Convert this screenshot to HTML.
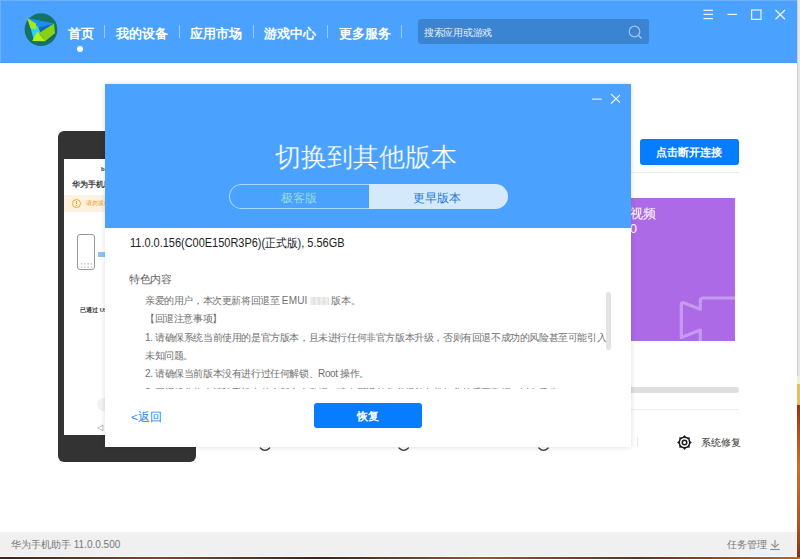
<!DOCTYPE html>
<html><head><meta charset="utf-8">
<style>
*{margin:0;padding:0;box-sizing:border-box}
html,body{width:800px;height:559px;overflow:hidden;background:#fff}
body{position:relative;font-family:"Liberation Sans",sans-serif}
.a{position:absolute}
.hdr{left:0;top:0;width:797px;height:63px;background:#4aa2fe}
.nav{top:25px;height:18px;font-size:13px;font-weight:bold;color:#fff;line-height:18px;white-space:nowrap}
.sep{top:25px;width:1px;height:13px;background:rgba(255,255,255,0.45)}
.search{left:418px;top:19px;width:231px;height:25px;background:#3b84d2;border-radius:3px}
.stxt{left:424px;top:26px;font-size:9.7px;letter-spacing:-0.3px;color:#e8f2fc;line-height:14px;white-space:nowrap}
.win{background:#fff}
.modal{left:105px;top:84px;width:526px;height:363px;background:#fff;box-shadow:0 0 5px rgba(0,0,0,0.15)}
.mh{left:0;top:0;width:526px;height:144px;background:#4aa2fe}
.body-t{font-size:10px;color:#717171;white-space:nowrap;line-height:14px;letter-spacing:-0.4px}
</style></head>
<body>
<!-- wallpaper strips -->
<div class="a" style="left:797px;top:0;width:3px;height:376px;background:#e7e7e7"></div>
<div class="a" style="left:797px;top:0;width:1px;height:559px;background:#cfcfcf"></div>
<div class="a" style="left:797px;top:376px;width:3px;height:8px;background:#f0f0d8"></div>
<div class="a" style="left:797px;top:384px;width:3px;height:21px;background:#e6c060"></div>
<div class="a" style="left:797px;top:405px;width:3px;height:154px;background:linear-gradient(#a03010,#d07020 40%,#b05020 80%,#803010)"></div>
<div class="a" style="left:0;top:556px;width:797px;height:1px;background:#fafafa"></div>
<div class="a" style="left:0;top:557px;width:800px;height:2px;background:linear-gradient(90deg,#3a2418,#7a4a30 20%,#3a2418 40%,#8a5838 60%,#5a3420 80%,#b06a30)"></div>

<!-- header -->
<div class="a hdr"></div>
<div class="a" style="left:0;top:0;width:797px;height:1px;background:#6cb0f9"></div>
<div class="a" style="left:0;top:0;width:1px;height:63px;background:#6cb0f9"></div>
<div class="a" style="left:0;top:62px;width:797px;height:1px;background:#439df9"></div>
<!-- logo -->
<svg class="a" style="left:22px;top:11px" width="38" height="38" viewBox="0 0 38 38">
  <circle cx="19" cy="18.6" r="16.4" fill="#167266"/>
  <polygon points="5.1,7.1 32,12.6 22,17.5 17.5,16.5" fill="#1c8ef0"/>
  <polygon points="17.5,16.5 32,12.6 22,19 18.5,19" fill="#1565c8"/>
  <polygon points="7.5,13 16,15 18.5,22 11.5,28" fill="#2cd2f2"/>
  <polygon points="32,12.6 33,22.5 23.5,30.3 17,22" fill="#86d214"/>
  <polygon points="33,22.5 33.3,23.5 24,31 23.5,30.3" fill="#15508a"/>
  <polygon points="5.1,7.1 13.9,12.6 14.6,18.4 8.5,17.3" fill="#a6ea1c"/>
  <polygon points="15.3,20.4 23.5,30.3 10.2,29.9" fill="#b2f21e"/>
</svg>
<div class="a nav" style="left:68px">首页</div>
<div class="a" style="left:77px;top:46px;width:6px;height:6px;border-radius:3px;background:#fff"></div>
<div class="a sep" style="left:104px"></div>
<div class="a nav" style="left:116px">我的设备</div>
<div class="a sep" style="left:179px"></div>
<div class="a nav" style="left:190px">应用市场</div>
<div class="a sep" style="left:253px"></div>
<div class="a nav" style="left:264px">游戏中心</div>
<div class="a sep" style="left:327px"></div>
<div class="a nav" style="left:339px">更多服务</div>
<div class="a sep" style="left:401px"></div>
<div class="a search"></div>
<div class="a stxt">搜索应用或游戏</div>
<svg class="a" style="left:628px;top:24.5px" width="15" height="15" viewBox="0 0 15 15"><circle cx="6.5" cy="6.5" r="5.3" fill="none" stroke="#a2c6ee" stroke-width="1.2"/><line x1="10.5" y1="10.5" x2="13.5" y2="13.5" stroke="#a9cdf2" stroke-width="1.2"/></svg>
<!-- window controls -->
<svg class="a" style="left:700px;top:5px" width="90" height="20" viewBox="0 0 90 20">
  <g stroke="#eaf4fe" stroke-width="1.2" fill="none">
    <line x1="3.5" y1="5.3" x2="13" y2="5.3"/><line x1="3.5" y1="9.4" x2="13" y2="9.4"/><line x1="3.5" y1="13.6" x2="13" y2="13.6"/>
    <line x1="27.4" y1="9.4" x2="37" y2="9.4"/>
    <rect x="51.6" y="5" width="9.4" height="9.4"/>
    <line x1="75.5" y1="5" x2="85" y2="14.3"/><line x1="85" y1="5" x2="75.5" y2="14.3"/>
  </g>
</svg>

<!-- phone mockup -->
<div class="a" style="left:58px;top:131px;width:138px;height:331px;background:#333;border-radius:6px"></div>
<div class="a" style="left:64px;top:159px;width:132px;height:276px;background:#fff"></div>
<div class="a" style="left:101px;top:165px;font-size:6px;font-weight:bold;color:#333;line-height:8px">b</div>
<div class="a" style="left:72px;top:180px;font-size:8px;font-weight:bold;color:#3a3a3a;line-height:10px;white-space:nowrap">华为手机助手</div>
<div class="a" style="left:64px;top:195px;width:60px;height:17px;background:#fdf1e2"></div>
<div class="a" style="left:72px;top:199px;width:9px;height:9px;border:1px solid #f5a623;border-radius:50%"></div>
<div class="a" style="left:76px;top:201px;width:1px;height:3px;background:#f5a623"></div>
<div class="a" style="left:76px;top:205px;width:1px;height:1px;background:#f5a623"></div>
<div class="a" style="left:86px;top:199px;font-size:6px;color:#f29a1a;line-height:8px;white-space:nowrap">请勿拔出数据线</div>
<div class="a" style="left:77px;top:234px;width:18px;height:36px;border:1px solid #999;border-radius:3px"></div>
<div class="a" style="left:79.5px;top:262px;width:13px;height:7px;background:radial-gradient(circle,#cfcfcf 0.9px,transparent 1.3px) 0 0/3.25px 3.5px"></div>
<div class="a" style="left:98px;top:252px;width:8px;height:5px;background:#8cc2f2"></div>
<div class="a" style="left:80px;top:306px;font-size:6px;font-weight:bold;color:#333;line-height:8px;white-space:nowrap">已通过 USB 连接</div>
<div class="a" style="left:97px;top:398px;width:13px;height:13px;background:#f2f2f2;border-radius:50%"></div>
<div class="a" style="left:97px;top:423px;font-size:8px;color:#888;line-height:9px">◁</div>

<!-- right panel -->
<div class="a" style="left:640px;top:139px;width:99px;height:26px;background:#067cff;border-radius:3px"></div>
<div class="a" style="left:656px;top:144px;font-size:11px;font-weight:bold;color:#fff;line-height:16px;white-space:nowrap">点击断开连接</div>
<div class="a" style="left:600px;top:172px;width:139px;height:1px;background:#ececec"></div>
<div class="a" style="left:600px;top:198px;width:135px;height:143px;background:#ac6ae6;overflow:hidden">
  <div class="a" style="left:4px;top:8px;font-size:12.5px;color:#fff;line-height:16px;white-space:nowrap">图片视频</div>
  <div class="a" style="left:30px;top:24px;font-size:12.5px;color:#fff;line-height:14px;white-space:nowrap">0</div>
  <svg class="a" style="left:0;top:0" width="135" height="143" viewBox="600 198 135 143">
    <path d="M745,298 L703,298 Q700.3,298 700.3,301 L700.3,309.2 L683.5,302.8 Q681.3,302 681.3,304.5 L681.3,337.6 L700.3,330.1 L700.3,345" fill="none" stroke="rgba(255,255,255,0.32)" stroke-width="3.2" stroke-linejoin="round"/>
  </svg>
</div>
<div class="a" style="left:600px;top:387px;width:139px;height:6px;background:#dfdfdf;border-radius:3px"></div>
<div class="a" style="left:600px;top:409px;width:139px;height:1px;background:#eeeeee"></div>
<div class="a" style="left:637px;top:437px;width:1px;height:10px;background:#e8e8e8"></div>
<svg class="a" style="left:677px;top:434.5px" width="15" height="15" viewBox="0 0 15 15">
<circle cx="7.5" cy="7.5" r="5.9" fill="#1a1a1a"/><path d="M6.17,1.75 L7.50,0.10 L8.83,1.75 L10.63,2.50 L12.73,2.27 L12.50,4.37 L13.25,6.17 L14.90,7.50 L13.25,8.83 L12.50,10.63 L12.73,12.73 L10.63,12.50 L8.83,13.25 L7.50,14.90 L6.17,13.25 L4.37,12.50 L2.27,12.73 L2.50,10.63 L1.75,8.83 L0.10,7.50 L1.75,6.17 L2.50,4.37 L2.27,2.27 L4.37,2.50Z" fill="#1a1a1a"/>
<circle cx="7.5" cy="7.5" r="4.5" fill="#fff"/><circle cx="7.5" cy="7.5" r="3.0" fill="#1a1a1a"/><circle cx="7.5" cy="7.5" r="1.5" fill="#fff"/>
</svg>
<div class="a" style="left:701px;top:436px;font-size:9.5px;color:#333;line-height:14px;white-space:nowrap">系统修复</div>


<!-- status bar -->
<div class="a" style="left:0;top:532px;width:797px;height:24px;background:#f0f0f0"></div>
<div class="a" style="left:11px;top:538px;font-size:10px;color:#777;line-height:14px;white-space:nowrap">华为手机助手 11.0.0.500</div>
<div class="a" style="left:727px;top:538px;font-size:10px;color:#777;line-height:14px;white-space:nowrap">任务管理</div>

<svg class="a" style="left:769px;top:539px" width="12" height="12" viewBox="0 0 12 12"><g stroke="#888" stroke-width="1.1" fill="none"><line x1="6" y1="1" x2="6" y2="8"/><polyline points="2.5,5 6,8.3 9.5,5"/><line x1="1.2" y1="10.5" x2="10.8" y2="10.5"/></g></svg>
<!-- modal -->
<div class="a modal">
  <div class="a mh"></div>
  <svg class="a" style="left:485px;top:8px" width="30" height="14" viewBox="0 0 30 14">
    <g stroke="#eef6ff" stroke-width="1.1" fill="none">
      <line x1="2" y1="7.1" x2="11.7" y2="7.1"/>
      <line x1="21" y1="2" x2="31" y2="11.5"/><line x1="31" y1="2" x2="21" y2="11.5"/>
    </g>
  </svg>
  <div class="a" style="left:-2px;top:56px;width:526px;text-align:center;font-size:25.7px;color:#fff;line-height:34px;white-space:nowrap;font-weight:300;-webkit-text-stroke:0.25px #4aa2fe">切换到其他版本</div>
  <div class="a" style="left:124px;top:100px;width:140px;height:25px;border:1px solid rgba(255,255,255,0.55);border-right:none;border-radius:13px 0 0 13px"></div>
  <div class="a" style="left:264px;top:100px;width:139px;height:25px;background:#d5e9fd;border-radius:0 13px 13px 0"></div>
  <div class="a" style="left:124px;top:106px;width:140px;text-align:center;font-size:12px;color:#92dcdc;line-height:17px">极客版</div>
  <div class="a" style="left:264px;top:106px;left:262px;width:139px;text-align:center;font-size:11.5px;color:#2679dc;line-height:17px">更早版本</div>
  <div class="a" style="left:25px;top:150px;font-size:12.2px;color:#222;line-height:18px;white-space:nowrap;transform:scaleX(0.9);transform-origin:0 0">11.0.0.156(C00E150R3P6)(正式版), 5.56GB</div>
  <div class="a" style="left:0;top:185px;width:526px;height:120px;overflow:hidden">
    <div class="a body-t" style="left:24px;top:3px;font-size:11px;color:#666">特色内容</div>
    <div class="a body-t" style="left:40px;top:25px">亲爱的用户，本次更新将回退至 <span style="letter-spacing:0.2px">EMUI</span> <span style="display:inline-block;vertical-align:-1px;width:19px;height:8px;background:repeating-linear-gradient(90deg,#eee 0 3px,#e2e2e2 3px 5px)"></span> <span style="letter-spacing:0">版本。</span></div>
    <div class="a body-t" style="left:40px;top:43px">【回退注意事项】</div>
    <div class="a body-t" style="left:40px;top:61.5px">1. 请确保系统当前使用的是官方版本，且未进行任何非官方版本升级，否则有回退不成功的风险甚至可能引入</div>
    <div class="a body-t" style="left:40px;top:80px">未知问题。</div>
    <div class="a body-t" style="left:40px;top:98px">2. 请确保当前版本没有进行过任何解锁、Root 操作。</div>
    <div class="a body-t" style="left:40px;top:116.5px">3. 回退操作将会清除手机中的全部个人数据，请在回退前务必提前备份好您的重要数据，以免丢失。</div>
  </div>
  <div class="a" style="left:501px;top:208px;width:5px;height:58px;background:#e3e3e3;border-radius:3px"></div>
  <div class="a" style="left:26px;top:325px;font-size:11.8px;color:#2a86f2;line-height:17px;white-space:nowrap">&lt;返回</div>
  <div class="a" style="left:209px;top:319px;width:108px;height:25px;background:#067cff;border-radius:3px;text-align:center;font-size:11px;font-weight:bold;color:#fff;line-height:26px">恢复</div>
</div>
<svg class="a" style="left:0;top:446.5px" width="800" height="6">
<g fill="none" stroke="#3a3a3a" stroke-width="1.25" stroke-linecap="round">
<path d="M260.3,1 Q265,5.6 269.7,1"/>
<path d="M399,1 Q403.7,5.6 408.4,1"/>
<path d="M538.8,1 Q543.5,5.6 548.2,1"/>
</g></svg>
</body></html>
